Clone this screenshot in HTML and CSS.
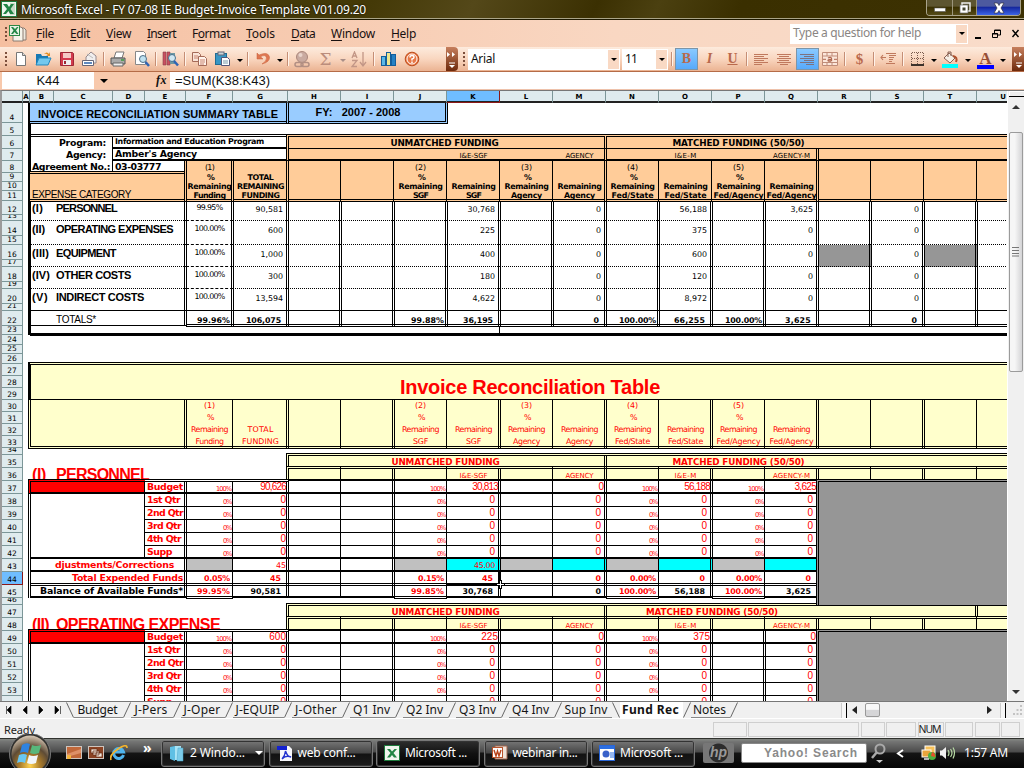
FILE: index.html
```html
<!DOCTYPE html>
<html lang="en">
<head>
<meta charset="utf-8">
<title>Microsoft Excel - FY 07-08 IE Budget-Invoice Template V01.09.20</title>
<link rel="stylesheet" href="styles.css">
</head>
<body>
<div class="window">
  <header class="titlebar">
    <svg class="xl" width="16" height="16" viewBox="0 0 16 16"><rect x=".5" y=".5" width="15" height="15" fill="#f0f6ee" stroke="#1d7a3c"/><rect x="9" y="2" width="5" height="12" fill="#c8dcc8"/><path d="M2 3h4l2 3 2-3h3L9.500 8 13 13H9L7.500 10 5 13H2l4-5z" fill="#218544"/></svg>
    <span class="title" data-w="345">Microsoft Excel - FY 07-08 IE Budget-Invoice Template V01.09.20</span>
    <div class="winbtns">
      <span class="wb"><svg width="14" height="12"><rect x="1.500" y="6" width="11" height="3.500" fill="#fff" stroke="#555" stroke-width=".6"/></svg></span>
      <span class="wb"><svg width="14" height="14"><rect x="4" y="2" width="8" height="8" fill="none" stroke="#eee" stroke-width="1.500"/><rect x="2" y="4" width="8" height="8" fill="#fff" stroke="#666" stroke-width=".7"/><rect x="4.500" y="6.500" width="3" height="3" fill="#443"/></svg></span>
      <span class="wb close"><svg width="14" height="12"><path d="M2 1h3.500L7 3.500 8.500 1H12L9 6l3 5H8.500L7 8.500 5.500 11H2l3-5z" fill="#fff" stroke="#334" stroke-width=".7"/></svg></span>
    </div>
  </header>

  <nav class="menubar">
    <i class="grip"></i>
    <svg class="docicon" width="18" height="17" viewBox="0 0 18 17"><path d="M9 3h6l2 2v10H8z" fill="#eee9df" stroke="#8b7a70"/><path d="M4 2h8l2 2v12H4z" fill="#f6f3ea" stroke="#8b7a70"/><rect x=".5" y=".5" width="10" height="10" fill="#e9f3e5" stroke="#2e8745"/><path d="M2 2h2l2 2 2-2h1.500L7 5.500 9.500 9H7.500L5.500 7 4 9H2l2.500-3.500z" fill="#238747"/></svg>
    <span class="m" data-w="18"><u>F</u>ile</span><span class="m" data-w="20"><u>E</u>dit</span><span class="m" data-w="25"><u>V</u>iew</span><span class="m" data-w="29"><u>I</u>nsert</span><span class="m" data-w="38">F<u>o</u>rmat</span><span class="m" data-w="29"><u>T</u>ools</span><span class="m" data-w="24"><u>D</u>ata</span><span class="m" data-w="44"><u>W</u>indow</span><span class="m" data-w="25"><u>H</u>elp</span>
    <div class="ask"><span data-w="128">Type a question for help</span><b class="drop"><i class="arr"></i></b></div>
    <svg class="mdi" width="46" height="14"><path d="M1 11h6" stroke="#000" stroke-width="2"/><path d="M18.500 6.500h5v4h-5zM20.500 6v-3h6v5h-3M20 3.500h7M18 7h6" fill="none" stroke="#000"/><path d="M38.500 3l6 7M44.500 3l-6 7" stroke="#000" stroke-width="1.400"/></svg>
  </nav>

  <div class="toolbar">
    <i class="grip"></i>
    <span class="ic"><svg width="16" height="16"><path d="M3.500 1.500h6l3 3v10h-9z" fill="#fff" stroke="#777"/><path d="M9.500 1.500v3h3" fill="#ddd" stroke="#777"/></svg></span>
    <span class="ic"><svg width="17" height="16"><path d="M1 3h5l1 2h6v9H1z" fill="#1779b4"/><path d="M1 14L4 7h12l-3 7z" fill="#73c8ee" stroke="#2487bd"/><path d="M9 3q3-3 5 0l1-2v4h-4l2-1q-2-2-4-1" fill="#e58c1c"/></svg></span>
    <span class="ic"><svg width="16" height="16"><path d="M1.500 1.500h12l1 1v12h-13z" fill="#d33a4c" stroke="#9c2836"/><rect x="4" y="2" width="8" height="5" fill="#f5c9c5"/><rect x="4" y="9" width="8" height="5" fill="#eee"/><rect x="5" y="10" width="2" height="3" fill="#9c2836"/></svg></span>
    <span class="ic"><svg width="17" height="16"><path d="M5 6l5-5 5 4v7H5z" fill="#f1eeee" stroke="#96898c"/><path d="M6 3l6 4" stroke="#bbb"/><path d="M1.500 9.500h11v5h-11z" fill="#fff" stroke="#667"/><path d="M3 12h8" stroke="#2a62aa" stroke-width="1.500"/></svg></span>
    <i class="sep"></i>
    <span class="ic"><svg width="17" height="16"><path d="M4 7l2-6h8l-2 6z" fill="#fff" stroke="#777"/><path d="M1 7h14v6H1z" fill="#aaa" stroke="#555"/><path d="M3 12h10v3H3z" fill="#eee" stroke="#666"/><path d="M11 9h3" stroke="#389b3c" stroke-width="1.500"/></svg></span>
    <span class="ic"><svg width="16" height="16"><path d="M1.500.5h8l2 2v11h-10z" fill="#fff" stroke="#888"/><circle cx="9" cy="8" r="3.500" fill="#bfe2f2" stroke="#4f6f86"/><path d="M11.500 11l3.500 4" stroke="#2f65b4" stroke-width="2.500"/></svg></span>
    <i class="sep"></i>
    <span class="ic"><svg width="17" height="16"><path d="M1 1h3v13H1zM5 1h3v13H5z" fill="#c95160" stroke="#87404a" stroke-width=".6"/><path d="M8 2h5v11H8z" fill="#6e97a1"/><circle cx="10" cy="7" r="3.500" fill="#cfe7f2" stroke="#46728e"/><path d="M12 10l4 4.500" stroke="#2f65b4" stroke-width="2.500"/></svg></span>
    <i class="sep"></i>
    <span class="ic"><svg width="17" height="16"><path d="M1.500 1.500h6l2 2v7h-8z" fill="#f9e4d8" stroke="#a46a58"/><path d="M7.500 5.500h6l2 2v7h-8z" fill="#fff2ea" stroke="#a46a58"/><path d="M3 5h4M3 7h4M9 9h5M9 11h5M9 13h4" stroke="#c98570"/></svg></span>
    <span class="ic"><svg width="17" height="16"><rect x="1.500" y="2.500" width="11" height="11" fill="#3796c4" stroke="#226c92"/><rect x="4" y="1" width="6" height="3" fill="#cbd4d8" stroke="#667"/><path d="M7.500 6.500h6l2 2v6h-8z" fill="#fff" stroke="#557"/><path d="M9 10h5M9 12h5" stroke="#79a"/></svg></span>
    <span class="dd"><i class="arr"></i></span>
    <i class="sep"></i>
    <span class="ic"><svg width="16" height="16"><path d="M2 2v6h6L5.500 5.800q5-2.800 6 1Q12 10 7 13q8-2 7.500-7Q13 0 4 4z" fill="#df7650" stroke="#c65e39" stroke-width=".5"/></svg></span>
    <span class="dd"><i class="arr"></i></span>
    <i class="sep"></i>
    <span class="ic"><svg width="17" height="17"><circle cx="8" cy="6" r="5.500" fill="#c9aaa0" stroke="#ab877b"/><circle cx="6.500" cy="4" r="2" fill="#e8d3ca"/><rect x="1" y="11.500" width="8" height="4" rx="2" fill="none" stroke="#b28f83" stroke-width="1.500"/><rect x="7" y="11.500" width="8" height="4" rx="2" fill="none" stroke="#b28f83" stroke-width="1.500"/></svg></span>
    <span class="ic sigma">Σ</span>
    <span class="dd"><i class="arr dim"></i></span>
    <span class="ic"><svg width="17" height="17"><path d="M1 7l2.500-6L6 7M2 5h3M1 9.500h5L1 15.500h5M12 1v13M9 11l3 4 3-4" fill="none" stroke="#c29686" stroke-width="1.300"/></svg></span>
    <i class="sep"></i>
    <span class="ic"><svg width="17" height="16"><rect x="1.500" y="5.500" width="4" height="9" fill="#5cb7e6" stroke="#135e9c"/><rect x="6.500" y="1.500" width="4" height="13" fill="#eee58d" stroke="#135e9c"/><rect x="11.500" y="3.500" width="4" height="11" fill="#2581c4" stroke="#135e9c"/></svg></span>
    <span class="ic"><svg width="16" height="16"><circle cx="8" cy="8" r="6.800" fill="#e87745" stroke="#bc4c1c"/><circle cx="8" cy="8" r="5" fill="none" stroke="#fff"/><path d="M6 6.500q0-2 2-2t2 1.700Q10 7.500 8 8v1.500M8 10.500v1.500" fill="none" stroke="#fff" stroke-width="1.500"/></svg></span>
    <span class="more m1"><svg width="11" height="24"><path d="M1 5l3 2.500L1 10zM6 5l3 2.500L6 10z" fill="#fff"/><path d="M3 16h6" stroke="#fff"/><path d="M3 18h6l-3 3z" fill="#fff"/></svg></span>
    <i class="grip g2"></i>
    <div class="combo c1"><span data-w="24">Arial</span><b class="drop"><i class="arr"></i></b></div>
    <div class="combo c2"><span data-w="12">11</span><b class="drop"><i class="arr"></i></b></div>
    <i class="sep"></i>
    <span class="ic ser on">B</span><span class="ic ser it">I</span><span class="ic ser un">U</span>
    <i class="sep"></i>
    <span class="ic"><svg width="15" height="12"><path d="M0 1.500h14M0 3.500h10M0 5.500h14M0 7.500h10M0 9.500h14M0 11.500h8" stroke="#c0795d"/></svg></span>
    <span class="ic"><svg width="15" height="12"><path d="M0 1.500h14M2 3.500h10M0 5.500h14M2 7.500h10M0 9.500h14M3 11.500h8" stroke="#c0795d"/></svg></span>
    <span class="ic on"><svg width="15" height="12"><path d="M0 1.500h14M4 3.500h10M0 5.500h14M4 7.500h10M0 9.500h14M6 11.500h8" stroke="#7d7280"/></svg></span>
    <span class="ic"><svg width="17" height="15"><path d="M.5.500h15v13H.5zM.5 4h15M.5 10.500h15M5 .5V4M10 .5V4M5 10.500v3M10 10.500v3" fill="#fbe6da" stroke="#c08c78"/><path d="M1 7.300h3M12 7.300h3" stroke="#b06850"/><path d="M6 6q3-1.500 3.500.5V9.300M9 7.500q-3 0-3 1t3 .5" fill="none" stroke="#b06850" stroke-width="1.300"/></svg></span>
    <i class="sep"></i>
    <span class="ic ser dollar">$</span>
    <i class="sep"></i>
    <span class="ic"><svg width="17" height="14"><path d="M6 1.500h10M9 3.500h7M9 5.500h5M9 7.500h4M9 9.500h3M6 11.500h9M1 5.500h5M3 3l-2 2.500L3 8" fill="none" stroke="#c0795d" stroke-width="1.200"/></svg></span>
    <i class="sep"></i>
    <span class="ic"><svg width="14" height="14"><path d="M.5 1v11M6.500 1v11M12.500 1v11M1 .5h12M1 6.500h12" stroke="#7a5a4c" stroke-dasharray="1 1"/><path d="M0 13h13" stroke="#000" stroke-width="1.500"/></svg></span>
    <span class="dd d8"><i class="arr"></i></span>
    <span class="ic tall"><svg width="17" height="17"><path d="M2 7l5-5 6 5-5 5z" fill="#f6efe6" stroke="#865e50"/><path d="M6 6V1h3v4" fill="none" stroke="#865e50"/><path d="M11 5q5 1 3 6" fill="none" stroke="#b0502c" stroke-width="2"/><rect y="13" width="16" height="4" fill="#0ff"/></svg></span>
    <span class="dd"><i class="arr"></i></span>
    <span class="ic tall fontcol">A</span>
    <span class="dd"><i class="arr"></i></span>
    <span class="more m2"><svg width="12" height="24"><path d="M2 5l3 2.500L2 10zM7 5l3 2.500L7 10z" fill="#fff"/><path d="M4 16h6" stroke="#fff"/><path d="M4 18h6l-3 3z" fill="#fff"/></svg></span>
  </div>

  <div class="formula">
    <span class="namebox"><span data-w="23">K44</span></span>
    <i class="arr"></i>
    <em data-w="11">fx</em>
    <span class="fbox"><span data-w="95">=SUM(K38:K43)</span></span>
  </div>

  <main class="work">
    <div class="sheet" id="sheet"></div>
    <div class="vscroll">
      <b class="split"></b>
      <svg width="9" height="5"><path d="M0 5l4-4 4 4z" fill="#333"/></svg>
      <b class="thumb"><svg width="8" height="10"><path d="M0 .5h7M0 3.500h7M0 6.500h7M0 9h7" stroke="#777"/></svg></b>
      <svg class="dn" width="9" height="5"><path d="M0 0l4 4 4-4z" fill="#333"/></svg>
    </div>
  </main>

  <div class="tabs">
    <svg class="nav" width="64" height="16"><path d="M6.500 4v8M11 4v8L7 8zM27 4v8l-4-4zM39 4v8l4-4zM55 4v8l4-4zM60.500 4v8" fill="#000" stroke="#000" stroke-width=".6"/></svg>
    <div class="tablist" id="tabs"></div>
    <div class="hscroll"><b class="hs"></b><svg width="5" height="8"><path d="M5 0v8L0 4z" fill="#222"/></svg><b class="hthumb"></b><svg class="rt" width="5" height="8"><path d="M0 0v8l5-4z" fill="#222"/></svg><b class="hs end"></b></div>
    <svg class="resize" width="10" height="12"><path d="M7 1h2v2h-2zM3.500 5h2v2h-2zM7 5h2v2h-2zM0 9h2v2H0zM3.500 9h2v2h-2zM7 9h2v2h-2z" fill="#c3c3c3"/></svg>
  </div>

  <div class="status"><span data-w="31">Ready</span>
    <div class="panels"><b></b><b></b><b></b><b></b><b><span data-w="22">NUM</span></b><b></b><b></b><b></b></div>
  </div>

  <footer class="taskbar">
    <svg class="orb" width="44" height="34" viewBox="0 0 44 34"><defs><radialGradient id="o" cx=".5" cy=".82" r=".8"><stop offset="0" stop-color="#ffd452"/><stop offset=".35" stop-color="#a87a2a"/><stop offset=".65" stop-color="#5d4b36"/><stop offset="1" stop-color="#cfc0ad"/></radialGradient></defs><circle cx="22" cy="20" r="20.500" fill="#30302e" stroke="#777"/><circle cx="22" cy="20" r="18.500" fill="url(#o)"/><path d="M14 11q4-3 8-1l-2 9q-4-2-8 0z" fill="#2f83e0"/><path d="M24 11q4 2 9 0l-2 8q-5 2-9 0z" fill="#57b77b"/><path d="M11 21q5-2 8 0l-2 8q-4-2-8 0z" fill="#69c7f2"/><path d="M21 21q4 2 9 0l-2 8q-5 2-9 0z" fill="#f1f6fb"/></svg>
    <div class="quick">
      <svg width="16" height="14"><rect x=".5" y=".5" width="15" height="12" fill="#c1683a" stroke="#cfc5be"/><path d="M1 8l14-5v4L1 11z" fill="#dd9067"/><rect x="1" y="9" width="4" height="4" fill="#f3b33d"/></svg>
      <svg width="16" height="14"><rect x=".5" y=".5" width="15" height="12" fill="#8b4222" stroke="#cfc5be"/><path d="M3 3h6v4H3zM5 5h6v4H5zM8 7h6v4H8z" fill="#f3e6da" stroke="#652c14" stroke-width=".7"/></svg>
      <svg width="18" height="17"><path d="M13.500 10A5 5 0 1 1 13.500 7H5" fill="none" stroke="#4fb4ee" stroke-width="3"/><path d="M1 15Q-1 10 8 4T17 3" fill="none" stroke="#f3b42c" stroke-width="1.700"/></svg>
    </div>
    <span class="chev">»</span>
    <div class="tasks">
      <div class="task"><svg width="15" height="17"><path d="M1 2l5-1v15l-5-2z" fill="#5fbfe4"/><path d="M6 1h6v14H6z" fill="#a9e3f5"/><path d="M9 3h5v13H8z" fill="#7ccbe9" stroke="#4aa6cb" stroke-width=".5"/></svg><span data-w="55">2 Windo...</span><i class="arr wh"></i></div>
      <div class="task"><svg width="15" height="17"><path d="M3 1h9l3 3v12H3z" fill="#f7f7fb"/><path d="M0 1h10v4H0z" fill="#1422d0"/><path d="M5 14q3-3 3.500-8 2 6 5.500 6Q9 10 5 14" fill="none" stroke="#2333cf" stroke-width="1.400"/></svg><span data-w="58">web conf...</span></div>
      <div class="task act"><svg width="16" height="16"><rect x=".5" y=".5" width="15" height="15" fill="#f0f6ee" stroke="#1d7a3c"/><path d="M3 4h3l2 2.500L10.500 4H13L9.500 8l3.500 4.500h-3L8 10l-2 2.500H3L6.500 8z" fill="#218544"/></svg><span data-w="62">Microsoft ...</span></div>
      <div class="task"><svg width="16" height="16"><path d="M3 1h12v13H3z" fill="#efe2d9" stroke="#a0654c"/><rect x=".5" y="2.500" width="10" height="10" fill="#fff" stroke="#b9532c"/><path d="M2 5l2 6 1.500-5L7 11l2-6" fill="none" stroke="#b9421a" stroke-width="1.400"/></svg><span data-w="65">webinar in...</span></div>
      <div class="task"><svg width="16" height="16"><rect x=".5" y=".5" width="15" height="15" fill="#fff" stroke="#2a66d6"/><rect x="1" y="1" width="14" height="3" fill="#2d6ee0"/><circle cx="7" cy="9" r="3.500" fill="#3a62c9"/><path d="M12 7v6M14 7v6" stroke="#2d6ee0"/></svg><span data-w="63">Microsoft ...</span></div>
    </div>
    <span class="hp">hp</span>
    <span class="yahoo"><span data-w="94">Yahoo! Search</span></span>
    <svg class="mag" width="16" height="22"><circle cx="9" cy="6" r="4.500" fill="none" stroke="#a9a9a9" stroke-width="2"/><path d="M6 9l-5 6" stroke="#a9a9a9" stroke-width="2.500"/><path d="M5 17h7l-3.500 3z" fill="#ccc"/></svg>
    <svg class="lt" width="8" height="9"><path d="M7 1L2 4.500 7 8" fill="none" stroke="#fff" stroke-width="2"/></svg>
    <svg class="net" width="16" height="16"><rect x="4" y="1" width="10" height="8" fill="#f6c15a" stroke="#fff"/><rect x="1" y="5" width="9" height="7" fill="#e9a43c" stroke="#fff"/><circle cx="11" cy="11" r="4" fill="#4daf3e"/><path d="M11 7a4 4 0 0 1 3 5l-4-1z" fill="#e84d2a"/><path d="M3 14h5" stroke="#eee" stroke-width="1.500"/></svg>
    <svg class="vol" width="17" height="14"><path d="M1 4.500h2L7 1v12L3 9.500H1z" fill="#f0f0f0"/><path d="M9 4q2 3 0 6M11.500 3q3 4 0 8M14 1.500q3 5 0 11" fill="none" stroke="#b9dca6" stroke-width="1.200"/></svg>
    <span class="clock" data-w="44">1:57 AM</span>
  </footer>
</div>
<script src="sheet.js"></script>
</body>
</html>
```

FILE: styles.css
```css
* { box-sizing: border-box; }
body { margin: 0; font-family: "Noto Sans", sans-serif; overflow: hidden; }
.window { width: 1024px; height: 768px; display: flex; flex-direction: column; overflow: hidden; background: #fff; }
i, b { display: block; }
svg { display: block; flex: none; }
[data-w] { white-space: pre; flex: none; }
.arr { width: 0; height: 0; border: 3px solid transparent; border-top: 3px solid #000; border-bottom: 0; flex: none; }
.arr.dim { border-top-color: #a98f88; }
.arr.wh { border-width: 4px 4px 0; border-top-color: #fff; }

.titlebar { height: 20px; flex: none; display: flex; align-items: center; padding: 0 3px 1px 1px; background: linear-gradient(115deg, #453c12 0, #443907 36%, #544819 46%, #3b3002 58%, #4b4010 64%, #3a2f00 72%, #3d3203); border-bottom: 1px solid #1c1800; box-shadow: inset 0 -1px #aaa487; }
.title { margin-left: 4px; color: #fff; font-size: 12px; text-shadow: 0 0 2px #000; }
.winbtns { margin-left: auto; align-self: flex-start; display: flex; height: 16px; border: 1px solid #aaa48c; border-top: 0; border-radius: 0 0 4px 4px; overflow: hidden; }
.wb { width: 26px; display: flex; align-items: center; justify-content: center; border-right: 1px solid #9b957c; background: linear-gradient(#5d5530 0 40%, #3a3000 50%, #554b18); }
.wb + .wb { width: 24px; }
.wb.close { width: 43px; border: 0; background: linear-gradient(#4d5a9f 0 40%, #1629a0 50%, #3c65e8); }

.menubar { height: 27px; flex: none; display: flex; align-items: center; padding: 0 4px 0 5px; background: linear-gradient(90deg, #f5bfa0, #f9d7c2 60%, #f9dcca); font-size: 12px; color: #181010; }
.grip { width: 2px; height: 14px; background: repeating-linear-gradient(#7c4f3c 0 2px, transparent 2px 4px); flex: none; }
.docicon { margin: 0 8px 0 2px; }
.m { margin: -1px 0 0 16px; }
.docicon + .m { margin-left: 1px; }
.m u { text-underline-offset: 2px; }
.ask { margin-left: auto; width: 178px; height: 20px; background: #fff; display: flex; align-items: center; padding-left: 3px; color: #8a8583; }
.ask > span { margin-top: -2px; }
.drop { margin-left: auto; width: 11px; align-self: stretch; display: flex; align-items: center; justify-content: center; background: #f9d9c4; margin-block: 1px; margin-right: 1px; }
.mdi { margin-left: 6px; }

.toolbar { height: 25px; flex: none; display: flex; align-items: center; padding-left: 5px; background: linear-gradient(#fdebdd, #f9d6bf 50%, #ebb392); border-bottom: 1px solid #b56c47; }
.ic { width: 23px; height: 22px; flex: none; display: flex; align-items: center; justify-content: center; }
.toolbar > .grip + .ic { margin-left: 2px; }
.sep { width: 2px; height: 14px; margin: 0 2px; background: linear-gradient(90deg, #c58e75 50%, #fff3ea 50%); flex: none; }
.dd { width: 11px; flex: none; display: flex; justify-content: center; padding-top: 2px; }
.dd.d8 { width: 9px; }
.sigma { font: 17px "DejaVu Serif", serif; color: #bb8d7c; }
.more { width: 12px; height: 24px; flex: none; background: linear-gradient(#c67f5d, #6e2a0c); }
.more.m1 { margin-left: 23px; border-radius: 0 4px 4px 0; }
.more.m2 { margin-left: auto; }
.grip.g2 { margin: 0 3px 0 5px; }
.combo { height: 21px; background: #fff; display: flex; align-items: center; font-size: 12px; padding-left: 3px; flex: none; color: #111; }
.combo > span { margin-top: -2px; }
.c1 { width: 152px; }
.c2 { width: 46px; margin: 0 1px 0 2px; }
.ser { font: bold 14px "Liberation Serif", serif; color: #b9694c; }
.it { font-style: italic; }
.un { text-decoration: underline; }
.on { background: linear-gradient(#8ccbff, #55a8fa); outline: 1px solid #7d95a8; outline-offset: -1px; }
.dollar { font-size: 15px; }
.fontcol { font: bold 17px "Liberation Serif", serif; color: #974e35; line-height: 15px; }
.tall { width: 24px; }
.tall.fontcol { width: 17px; margin: 2px 3px 0 4px; height: 18px; border-bottom: 4px solid #00f; }

.formula { height: 18px; flex: none; display: flex; align-items: center; background: #f8c9ac; padding-left: 2px; font-family: "Liberation Sans", sans-serif; font-size: 13px; color: #111; border-bottom: 1px solid #eec2ab; }
.namebox { width: 92px; height: 17px; background: #fff; display: flex; justify-content: center; align-items: center; }
.formula > .arr { margin-left: 6px; border-width: 4px 4px 0; }
.formula em { margin-left: 48px; font: italic bold 12px "Liberation Serif", serif; }
.fbox { flex: 1; margin-left: 3px; height: 17px; background: #fff; padding: 0 0 0 5px; display: flex; align-items: center; }

.work { height: 611px; flex: none; display: flex; border-top: 1px solid #777; border-left: 2px solid #9b9b9b; overflow: hidden; }
.sheet { width: 1005px; height: 610px; display: grid; overflow: hidden; background: #fff; flex: none; }
.sheet > div { min-width: 0; min-height: 0; display: flex; align-items: center; justify-content: center; white-space: pre; line-height: 10px; }
.sheet span { flex: none; }
.hd { background: #dfebee; border-right: 1px solid #7c9698; border-bottom: 1px solid #7c9698; font: bold 7px "DejaVu Sans", sans-serif; overflow: hidden; color: #000; z-index: 2; }
.ch { border-bottom: 1px solid #222; box-shadow: 0 -1px #222 inset; }
.sheet > .rh { align-items: flex-end; line-height: 9px; font-size: 7.500px; font-weight: normal; }
.sel { background: #6fbdff; border-right-color: #8a1818; border-bottom-color: #8a1818; }

.blue { background: #99ccff; }
.peach { background: #ffcc99; }
.cream { background: #ffffcc; }
.dark { background: #969696; }
.silver { background: #c0c0c0; }
.cyan { background: #00ffff; }
.redbg { background: #ff0000; }
.white { background: #fff; }
.b1 { border-bottom: 1px solid #000; }
.b2 { border-bottom: 2px solid #000; }
.b3 { border-bottom: 3px solid #000; margin-bottom: -1px; }
.bd { border-bottom: 3px double #000; margin-bottom: -1px; }
.bt { border-bottom: 1px dotted #000; }
.bs { border-bottom: 1px dashed #000; }
.r1 { border-right: 1px solid #000; }
.rd { border-right: 3px double #000; margin-right: -1px; }
.ld { border-left: 3px double #000; margin-left: -2px; }
.l1 { border-left: 1px solid #000; margin-left: -1px; }
.l3 { border-left: 3px solid #000; margin-left: -2px; }
.td { border-top: 3px double #000; margin-top: -2px; }
.t1 { border-top: 1px solid #000; margin-top: -1px; }
.edge { z-index: 1; }

.sheet > .left { justify-content: flex-start; padding-left: 2px; }
.sheet > .right { justify-content: flex-end; }
.p1 { padding-right: 2px; } .p2 { padding-right: 3px; } .p5 { padding-right: 5px; } .p7 { padding-right: 7px; }
.p12 { padding-right: 12px; }
.lp { padding-right: 17px; }
.lq { padding-right: 4px; }
.dn1 { padding-top: 2px; } .dn3 { padding-top: 4px; }
.up1 { padding-bottom: 2px; }
.red { color: #ff0000; }
.n { font: 7.900px "DejaVu Sans", sans-serif; }
.nb { font: bold 7.900px "DejaVu Sans", sans-serif; }
.wide { font: bold 8.800px "DejaVu Sans", sans-serif; }
.lab { font: bold 9.400px "DejaVu Sans", sans-serif; }
.tiny { font: 7px "DejaVu Sans", sans-serif; }
.pc { font: 6.700px "DejaVu Sans", sans-serif; }
.rn { font: 10px "Liberation Sans", sans-serif; }
.ar { font: bold 11px "Liberation Sans", sans-serif; }
.arn { font: 10px "Liberation Sans", sans-serif; }
.h16 { font: bold 16px "Liberation Sans", sans-serif; }
.h20 { font: bold 20px "Liberation Sans", sans-serif; }
.over { overflow: hidden; }
.cursor { align-self: end; justify-self: end; width: 9px; height: 9px; margin: 0 -5px -4px 0; z-index: 3; }

.vscroll { width: 17px; background: #f0f0f0; border-left: 1px solid #fff; display: flex; flex-direction: column; align-items: center; flex: none; }
.split { width: 15px; height: 6px; background: #eee; border-bottom: 1px solid #000; margin: 0 0 7px; box-shadow: inset 1px 1px #fff; }
.thumb { width: 14px; height: 240px; margin-top: 23px; border: 1px solid #9b9b9b; border-radius: 2px; background: linear-gradient(90deg, #f6f6f6 40%, #d4d4d6); display: flex; align-items: center; justify-content: center; }
.vscroll .dn { margin-top: auto; margin-bottom: 6px; }

.tabs { height: 17px; flex: none; display: flex; background: #f0f0f0; border-top: 1px solid #777; font-size: 12px; color: #141414; align-items: center; }
.nav { width: 66px; }
.tablist { display: flex; height: 16px; width: 775px; }
.tablist svg { height: 16px; }
.tab { display: flex; align-items: center; justify-content: center; border-bottom: 1px solid #888; line-height: 15px; }
.tab span { margin-left: -2px; }
.tab.cur { background: #fff; font-weight: bold; border-bottom-color: #fff; }
.hscroll { display: flex; align-items: center; width: 165px; height: 16px; }
.hs { width: 6px; height: 15px; border-right: 1px solid #000; background: #f6f6f6; margin-right: 5px; box-shadow: inset 1px 0 #ccc; }
.hs.end { margin: 0 0 0 8px; }
.hthumb { width: 15px; height: 14px; margin-left: 8px; border: 1px solid #999; border-radius: 2px; background: linear-gradient(#f8f8f8 45%, #d5d5d7 50%); }
.hscroll .rt { margin-left: auto; }
.resize { margin-left: 7px; }

.status { height: 20px; flex: none; display: flex; align-items: center; background: #f0f0f0; border-top: 1px solid #fff; font-size: 11px; padding: 2px 4px 0 4px; color: #222; }
.status > span { margin-top: -1px; }
.panels { margin-left: auto; display: grid; grid-template-columns: 34px 111px 24px 30px 26px 28px 25px 19px; gap: 1.500px; height: 15px; }
.panels b { border: 1px solid #cfcfcf; font-weight: normal; font-size: 10.500px; line-height: 13px; }

.taskbar { height: 30px; flex: none; display: flex; align-items: center; background: linear-gradient(#30322e 0 1px, #80837f 1px 2px, #767776 3px, #4a4a4a 14px, #141414 15px, #050505); color: #fff; font-size: 12px; }
.orb { margin: -4px 0 0 8px; position: relative; align-self: flex-start; }
.quick { display: flex; align-items: center; gap: 6px; margin-left: 14px; }
.chev { font-weight: bold; font-size: 14px; margin: -12px 0 0 15px; width: 18px; }
.tasks { display: flex; gap: 3.500px; }
.task { width: 104px; height: 27px; border: 1px solid #777; border-radius: 3px; display: flex; align-items: center; padding-left: 7px; gap: 5px; background: linear-gradient(#777, #454545 48%, #121212 52%, #1c1c1c); box-shadow: inset 0 0 0 1px #333; }
.task svg { width: 16px; }
.task span { margin-top: -2px; }
.task.act { background: linear-gradient(#2e2e2e, #111 50%, #030303); }
.task .arr { margin-left: 5px; }
.hp { width: 31px; height: 20px; margin-left: 8px; border-radius: 2px; background: radial-gradient(circle at 50% 50%, #2c2c2c 9px, #777 10px); color: #999; font: italic bold 14px/18px "Liberation Sans", sans-serif; text-align: center; }
.yahoo { width: 126px; height: 20px; margin-left: 7px; background: #fff; border: 1px solid #888; border-radius: 2px; color: #8a8a8a; font: bold 12px "Liberation Sans", sans-serif; display: flex; align-items: center; justify-content: flex-end; padding-right: 8px; }
.mag { margin: 2px 0 0 4px; }
.lt { margin-left: 9px; }
.net { margin-left: 17px; }
.vol { margin-left: 2px; }
.clock { margin: -2px 0 0 8px; }
```

FILE: sheet.js
```js
// Column and row edges in sheet pixels.
const colEdges = [2, 23, 30, 54, 113, 145, 186, 233, 288, 341, 394, 447, 500, 553, 606, 659, 712, 765, 818, 871, 924, 977, 1030];
const rowEdges = [91, 103, 123, 136, 149, 161, 173, 182, 191, 201, 215, 221, 236, 245, 260, 267, 282, 289, 304, 311, 326, 335, 345, 354, 364, 376, 388, 400, 412, 424, 436, 448, 455, 468, 481, 494, 507, 520, 533, 546, 559, 572, 585, 598, 605, 618, 631, 644, 657, 670, 683, 696, 709];
const tracks = e => e.slice(1).map((v, i) => v - e[i] + 'px').join(' ');
const sheet = document.getElementById('sheet');
sheet.style.gridTemplateColumns = tracks(colEdges);
sheet.style.gridTemplateRows = tracks(rowEdges);

function place(c1, r1, c2, r2, cls, text, w) {
  const d = document.createElement('div');
  d.className = cls;
  d.style.gridArea = `${r1}/${c1}/${r2 + 1}/${c2 + 1}`;
  if (text !== undefined) {
    const s = document.createElement('span');
    s.textContent = text;
    if (w) s.dataset.w = w;
    d.append(s);
  }
  sheet.append(d);
}
const col = l => l.charCodeAt(0) - 63;
function put(range, cls, text, w) {
  const [a, b = a] = range.split(':');
  place(col(a[0]), +a.slice(1) - 2, col(b[0]), +b.slice(1) - 2, cls, text, w);
}
const COLS = 'ABCDEFGHIJKLMNOPQRSTU'.split('');
const from = l => COLS.slice(COLS.indexOf(l));

/* ---- Summary table ---- */
put('B4:B23', 'l3');
put('B23:U23', 'b3');
put('B4:G4', 'blue rd bd ar dn3', 'INVOICE RECONCILIATION SUMMARY TABLE', 240);
put('H4:J4', 'blue bd rd ar lp', 'FY:   2007 - 2008', 85);
put('G4', 'edge rd');
put('B5:U5', 'bd');
put('B6:C6', 'lab right p7', 'Program:', 47);
put('B7:C7', 'lab right p7', 'Agency:', 40);
put('B8:C8', 'lab right p2', 'Agreement No.:', 78);
put('D6:G6', 'l1 b2 nb left rd', 'Information and Education Program', 149);
put('D7:G7', 'l1 b2 lab left rd', "Amber's Agency", 82);
put('D8:E8', 'l1 b1 lab left r1', '03-03777', 46);
put('B9:E11', 'peach td bd');
put('B11', 'arn left up1', 'EXPENSE CATEGORY', 99);
put('F8:F11', 'peach ld rd bd');
put('G8:G11', 'peach rd bd');
put('H6:M6', 'peach td ld rd b1 wide lq', 'UNMATCHED FUNDING', 108);
put('N6:U6', 'peach td b1');
put('N6:R6', 'wide', 'MATCHED FUNDING (50/50)', 132);
put('H7:M7', 'peach ld rd b2');
put('N7:Q7', 'peach rd b2');
put('R7:U7', 'peach b2');
for (const c of from('H'))
  put(c + '8:' + c + '11', 'peach bd ' + (c === 'M' || c === 'Q' ? 'rd' : 'r1') + (c === 'H' ? ' ld' : ''));
put('E8:E11', 'edge rd');
put('F8:F11', 'edge rd');
put('G6:G11', 'edge rd');
put('M6:M11', 'edge rd');
put('Q7:Q11', 'edge rd');

const captions = {
  F: ['(1)', '%', 'Remaining', 'Funding'], J: ['(2)', '%', 'Remaining', 'SGF'], K: ['', '', 'Remaining', 'SGF'],
  L: ['(3)', '%', 'Remaining', 'Agency'], M: ['', '', 'Remaining', 'Agency'], N: ['(4)', '%', 'Remaining', 'Fed/State'],
  O: ['', '', 'Remaining', 'Fed/State'], P: ['(5)', '%', 'Remaining', 'Fed/Agency'], Q: ['', '', 'Remaining', 'Fed/Agency']
};
const boldW = { Remaining: 44, Funding: 32, SGF: 15, Agency: 31, 'Fed/State': 42, 'Fed/Agency': 50, '(1)': 9, '%': 5 };
const redW = { Remaining: 37, Funding: 28, SGF: 15, Agency: 27, 'Fed/State': 35, 'Fed/Agency': 44, '%': 5 };
for (const c in captions) captions[c].forEach((t, i) => {
  if (!t) return;
  put(c + (8 + i), i ? 'nb' : 'n dn1', t, boldW[t]);
});
put('G9', 'nb', 'TOTAL', 26);
put('G10', 'nb', 'REMAINING', 47);
put('G11', 'nb', 'FUNDING', 38);

const sources = { K: ['I&E-SGF', 28], M: ['AGENCY', 28], O: ['I&E-M', 22], Q: ['AGENCY-M', 37] };
const fundingLabels = (r, cls) => {
  for (const c in sources) put(c + r, cls, ...sources[c]);
};
fundingLabels(7, 'tiny dn1');

const lines = [
  [12, 13, '(I)', 11, 'PERSONNEL', 61, '99.95%', 26, '90,581', '30,768', '56,188', '3,625'],
  [14, 15, '(II)', 13, 'OPERATING EXPENSES', 117, '100.00%', 30, '600', '225', '375', '0'],
  [16, 17, '(III)', 17, 'EQUIPMENT', 60, '100.00%', 30, '1,000', '400', '600', '0'],
  [18, 19, '(IV)', 18, 'OTHER COSTS', 75, '100.00%', 30, '300', '180', '120', '0'],
  [20, 21, '(V)', 16, 'INDIRECT COSTS', 88, '100.00%', 30, '13,594', '4,622', '8,972', '0']
];
for (const [r, e, num, nw, name, w, p, pw, g, k, o, q] of lines) {
  const last = r === 20;
  put(`B${r}:E${e}`, last ? 'b1' : 'bt');
  for (const c of from('F'))
    put(`${c}${r}:${c}${e}`, (last ? 'b1' : c === 'F' ? 'bs' : 'bt') + (r === 16 && (c === 'R' || c === 'T') ? ' dark' : ''));
  put('B' + r, 'ar left', num, nw);
  put('C' + r, 'ar left', name, w);
  put('F' + r, 'n', p, pw);
  put('G' + r, 'n right p5 dn3', g);
  put('K' + r, 'n right p5 dn3', k);
  put('O' + r, 'n right p5 dn3', o);
  put('Q' + r, 'n right p5 dn3', q);
  put('M' + r, 'n right p5 dn3', '0');
  put('S' + r, 'n right p5 dn3', '0');
}
for (const c of from('F')) {
  put(`${c}12:${c}22`, 'rd' + (c === 'F' ? ' ld' : ''));
  put(c + '22', 'bd');
}
put('B22:E22', 'b1');
put('K23', 'r1');
put('C22', 'arn left dn1', 'TOTALS*', 40);
const totals = { F: ['99.96%', 33], G: ['106,075', 35], J: ['99.88%', 33], K: ['36,195', 30], M: ['0'], N: ['100.00%', 37], O: ['66,255', 31], P: ['100.00%', 37], Q: ['3,625', 26], S: ['0'] };
for (const c in totals) put(c + '22', 'nb right dn3 ' + ('FJNP'.includes(c) ? 'p2' : 'p7'), ...totals[c]);

/* ---- Reconciliation table ---- */
const pairEdge = c => ('EGIKMOQS'.includes(c) ? 'rd' : 'r1');
put('B27:U29', 'cream td b1 l3');
place(col('B'), 26, col('U'), 27, 'h20 red up1', 'Invoice Reconciliation Table', 260);
put('B30:E33', 'cream ld bd');
for (const c of from('F')) put(`${c}30:${c}33`, 'cream bd ' + (pairEdge(c) === 'r1' ? 'r1' : ''));
for (const c of 'EGIKMOQS') put(`${c}30:${c}33`, 'edge rd');
for (const c in captions) captions[c].forEach((t, i) => { if (t) put(c + (30 + i), 'n red', t, redW[t]); });
put('G32', 'n red', 'TOTAL', 26);
put('G33', 'n red', 'FUNDING', 37);

function section(top, num, nw, title, tw, data) {
  const r = top, full = top === 35;
  put(`H${r}:M${r}`, 'cream td ld wide red lq', 'UNMATCHED FUNDING', 108);
  put(`N${r}:U${r}`, 'cream td');
  put(`M${r}`, 'edge rd');
  put(`N${r}:${full ? 'R' : 'Q'}${r}`, 'wide red', 'MATCHED FUNDING (50/50)', 132);
  if (!full) put(`T${r}`, 'rd');
  for (const c of from('H')) {
    const double = pairEdge(c) === 'rd';
    put(`${c}${r + 1}`, 'cream td b2 ' + (double ? '' : 'r1') + (c === 'H' ? ' ld' : ''));
    if (double) put(`${c}${r + 1}`, 'edge rd');
  }
  fundingLabels(r + 1, 'tiny red dn1');
  put(`B${r + 1}`, 'h16 red left', num, nw);
  put(`C${r + 1}`, 'h16 red left', title, tw);

  const b = r + 2;
  put(`B${b}:D${b}`, 'redbg td ld b2');
  put(`E${b}:G${b}`, 'td white');
  const names = [['Budget', 36], ['1st Qtr', 33], ['2nd Qtr', 36], ['3rd Qtr', 34], ['4th Qtr', 34], ['Supp', 25]];
  for (let i = 0; i < names.length; i++) {
    const edge = i === 0 || i === 5 ? 'b2' : 'b1';
    put(`E${b + i}`, 'lab red left over l1 ' + edge, ...names[i]);
    for (const c of from('F').slice(0, 12)) {
      const pct = 'FJNP'.includes(c);
      let t, cls;
      if (pct && !(c === 'P' && !full)) { t = i ? '0%' : '100%'; cls = 'pc p1 dn1'; }
      if ('GKMOQ'.includes(c)) { t = i ? '0' : data[c]; cls = 'rn up1 ' + (i && c !== 'G' ? 'p5' : 'p1'); }
      put(`${c}${b + i}`, edge);
      if (t) put(`${c}${b + i}`, 'right red ' + cls, t, t === '100%' ? 15 : t === '0%' ? 8 : t.length > 3 ? t.length * 4.3 : undefined);
    }
  }
  const end = full ? b + 8 : b + 5;
  for (const c of 'EFGHIJKLMNOPQ') put(`${c}${b}:${c}${end}`, 'edge ' + ((!full && c === 'P') ? 'rd' : pairEdge(c)));
  put(`B${b}:B${end}`, 'ld');
  put(`R${b}:U${full ? b + 9 : end}`, 'dark td ld edge');
}
section(35, '(I)', 14, 'PERSONNEL', 93, { G: '90,626', K: '30,813', M: '0', O: '56,188', Q: '3,625' });
section(47, '(II)', 17, 'OPERATING EXPENSE', 164, { G: '600', K: '225', M: '0', O: '375', Q: '0' });

put('B42:D42', 'b2');
put('B43:E43', 'b2 lab red right p12', 'djustments/Corrections', 119);
put('B44:E44', 'bd lab red right p2', 'Total Expended Funds', 111);
put('B45:E45', 'b2 lab right p2', 'Balance of Available Funds*', 143);
for (const c of from('F').slice(0, 12)) {
  const fill = 'FJLNP'.includes(c) ? ' silver' : 'KMOQ'.includes(c) ? ' cyan' : '';
  put(c + '43', 'b2' + fill);
  put(c + '44', 'bd');
  put(c + '45', 'FJNP'.includes(c) ? 'bd' : 'b2');
}
put('G43', 'n red right p1', '45');
put('K43', 'n red right p5', '45.00', 21);
const spent = { F: '0.05%', G: '45', J: '0.15%', K: '45', M: '0', N: '0.00%', O: '0', P: '0.00%', Q: '0' };
const left = { F: '99.95%', G: '90,581', J: '99.85%', K: '30,768', M: '0', N: '100.00%', O: '56,188', P: '100.00%', Q: '3,625' };
for (const c in spent) {
  const pct = 'FJNP'.includes(c);
  const pad = pct ? ' p2' : c === 'M' ? ' p5' : ' p7';
  put(c + '44', 'nb red right' + pad, spent[c], pct ? 26 : undefined);
  put(c + '45', 'nb right' + pad + (pct ? ' red' : ''), left[c], pct ? (left[c].length > 6 ? 37 : 33) : undefined);
}
put('K44', 'r1 l1 t1 b1');
put('K44', 'cursor');
sheet.lastChild.innerHTML = '<svg width="9" height="9"><path d="M4.5 0v9M0 4.500h9" stroke="#000" stroke-width="3"/><path d="M4.500 1v7M1 4.500h7" stroke="#fff"/></svg>';

/* ---- Headings ---- */
place(1, 1, 1, 1, 'hd ch');
COLS.forEach((c, i) => place(i + 2, 1, i + 2, 1, 'hd ch' + (c === 'K' ? ' sel' : ''), c));
for (let r = 4; r <= 54; r++) place(1, r - 2, 1, r - 2, 'hd rh' + (r === 44 ? ' sel' : ''), r < 54 ? String(r) : '');

/* ---- Sheet tabs: name, text width, slot width ---- */
const tabs = document.getElementById('tabs');
const slash = up => `<svg width="8" height="16"><path d="${up ? 'M0.5 15.500L7.500 .5' : 'M.5 .5L7.500 15.500'}" stroke="#666" fill="none"/></svg>`;
let html = slash(false);
for (const [name, w, slot, up] of [['Budget', 40, 49, 1], ['J-Pers', 33, 42, 1], ['J-Oper', 37, 44, 1], ['J-EQUIP', 44, 51, 1], ['J-Other', 42, 50, 1], ['Q1 Inv', 37, 45, 1], ['Q2 Inv', 37, 45, 1], ['Q3 Inv', 37, 45, 1], ['Q4 Inv', 37, 45, 1], ['Sup Inv', 43, 50, 0], ['Fund Rec', 57, 63, 1], ['Notes', 33, 39, 1]])
  html += `<div class="tab${name === 'Fund Rec' ? ' cur' : ''}" style="width:${slot}px"><span data-w="${w}">${name}</span></div>` + slash(up);
tabs.innerHTML = html;

// Track each label so it spans its nominal width.
for (const s of document.querySelectorAll('[data-w]')) {
  const n = s.textContent.length, now = s.getBoundingClientRect().width;
  s.style.letterSpacing = ((s.dataset.w - now) / n).toFixed(3) + 'px';
}
```
